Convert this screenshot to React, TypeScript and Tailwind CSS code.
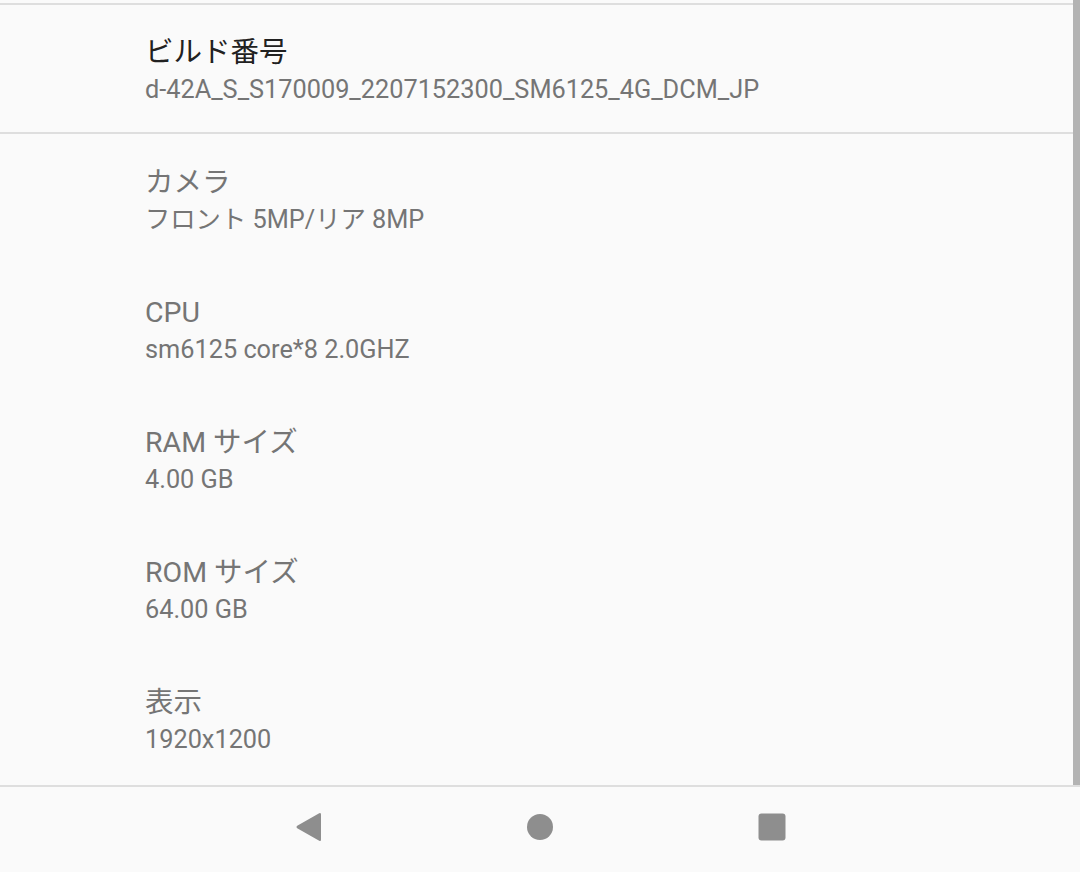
const rows = [
  { title: 'カメラ', value: 'フロント 5MP/リア 8MP' },
  { title: 'CPU', value: 'sm6125 core*8 2.0GHZ' },
  { title: 'RAM サイズ', value: '4.00 GB' },
  { title: 'ROM サイズ', value: '64.00 GB' },
  { title: '表示', value: '1920x1200' },
];

const font = { fontFamily: 'Roboto, "Noto Sans CJK JP", sans-serif' };

const Row = ({ title, value, dark, h }: { title: string; value: string; dark?: boolean; h: string }) => (
  <div className={`flex flex-col justify-center pl-[145px] ${h}`}>
    <div className={`text-[28.5px] leading-[42px] ${dark ? 'text-[#212121]' : 'text-[#757575]'}`}>{title}</div>
    <div className="text-[25.3px] leading-[32px] text-[#757575]">{value}</div>
  </div>
);

export default function App() {
  return (
    <div className="w-[1080px] h-[872px] flex flex-col bg-[#fafafa] overflow-hidden" style={font}>
      <div className="flex h-[785px]">
        <div className="flex-1 flex flex-col">
          <div className="h-[3px]" />
          <div className="h-[2px] bg-[#dedede]" />
          <Row title="ビルド番号" value="d-42A_S_S170009_2207152300_SM6125_4G_DCM_JP" dark h="h-[127px]" />
          <div className="h-[2px] bg-[#dedede]" />
          {rows.map((r) => (
            <Row key={r.title} title={r.title} value={r.value} h="h-[130px]" />
          ))}
        </div>
        <div className="w-[7px] bg-[#b3b3b3]" />
      </div>
      <div className="h-[2px] bg-[#dedede]" />
      <div className="flex-1 flex items-center justify-center gap-[204px] pb-[6px]">
        <svg width="28" height="32" viewBox="0 0 28 32">
          <path d="M27 3.5 L27 28.5 Q27 30.8 25.2 29.7 L3.2 17.3 Q1.5 16 3.2 14.7 L25.2 2.3 Q27 1.2 27 3.5 Z" fill="#8e8e8e" />
        </svg>
        <svg width="28" height="28" viewBox="0 0 28 28">
          <circle cx="14" cy="14" r="13" fill="#8e8e8e" />
        </svg>
        <svg width="28" height="28" viewBox="0 0 28 28">
          <rect x="0.5" y="0.5" width="27" height="27" rx="3" fill="#8e8e8e" />
        </svg>
      </div>
    </div>
  );
}
